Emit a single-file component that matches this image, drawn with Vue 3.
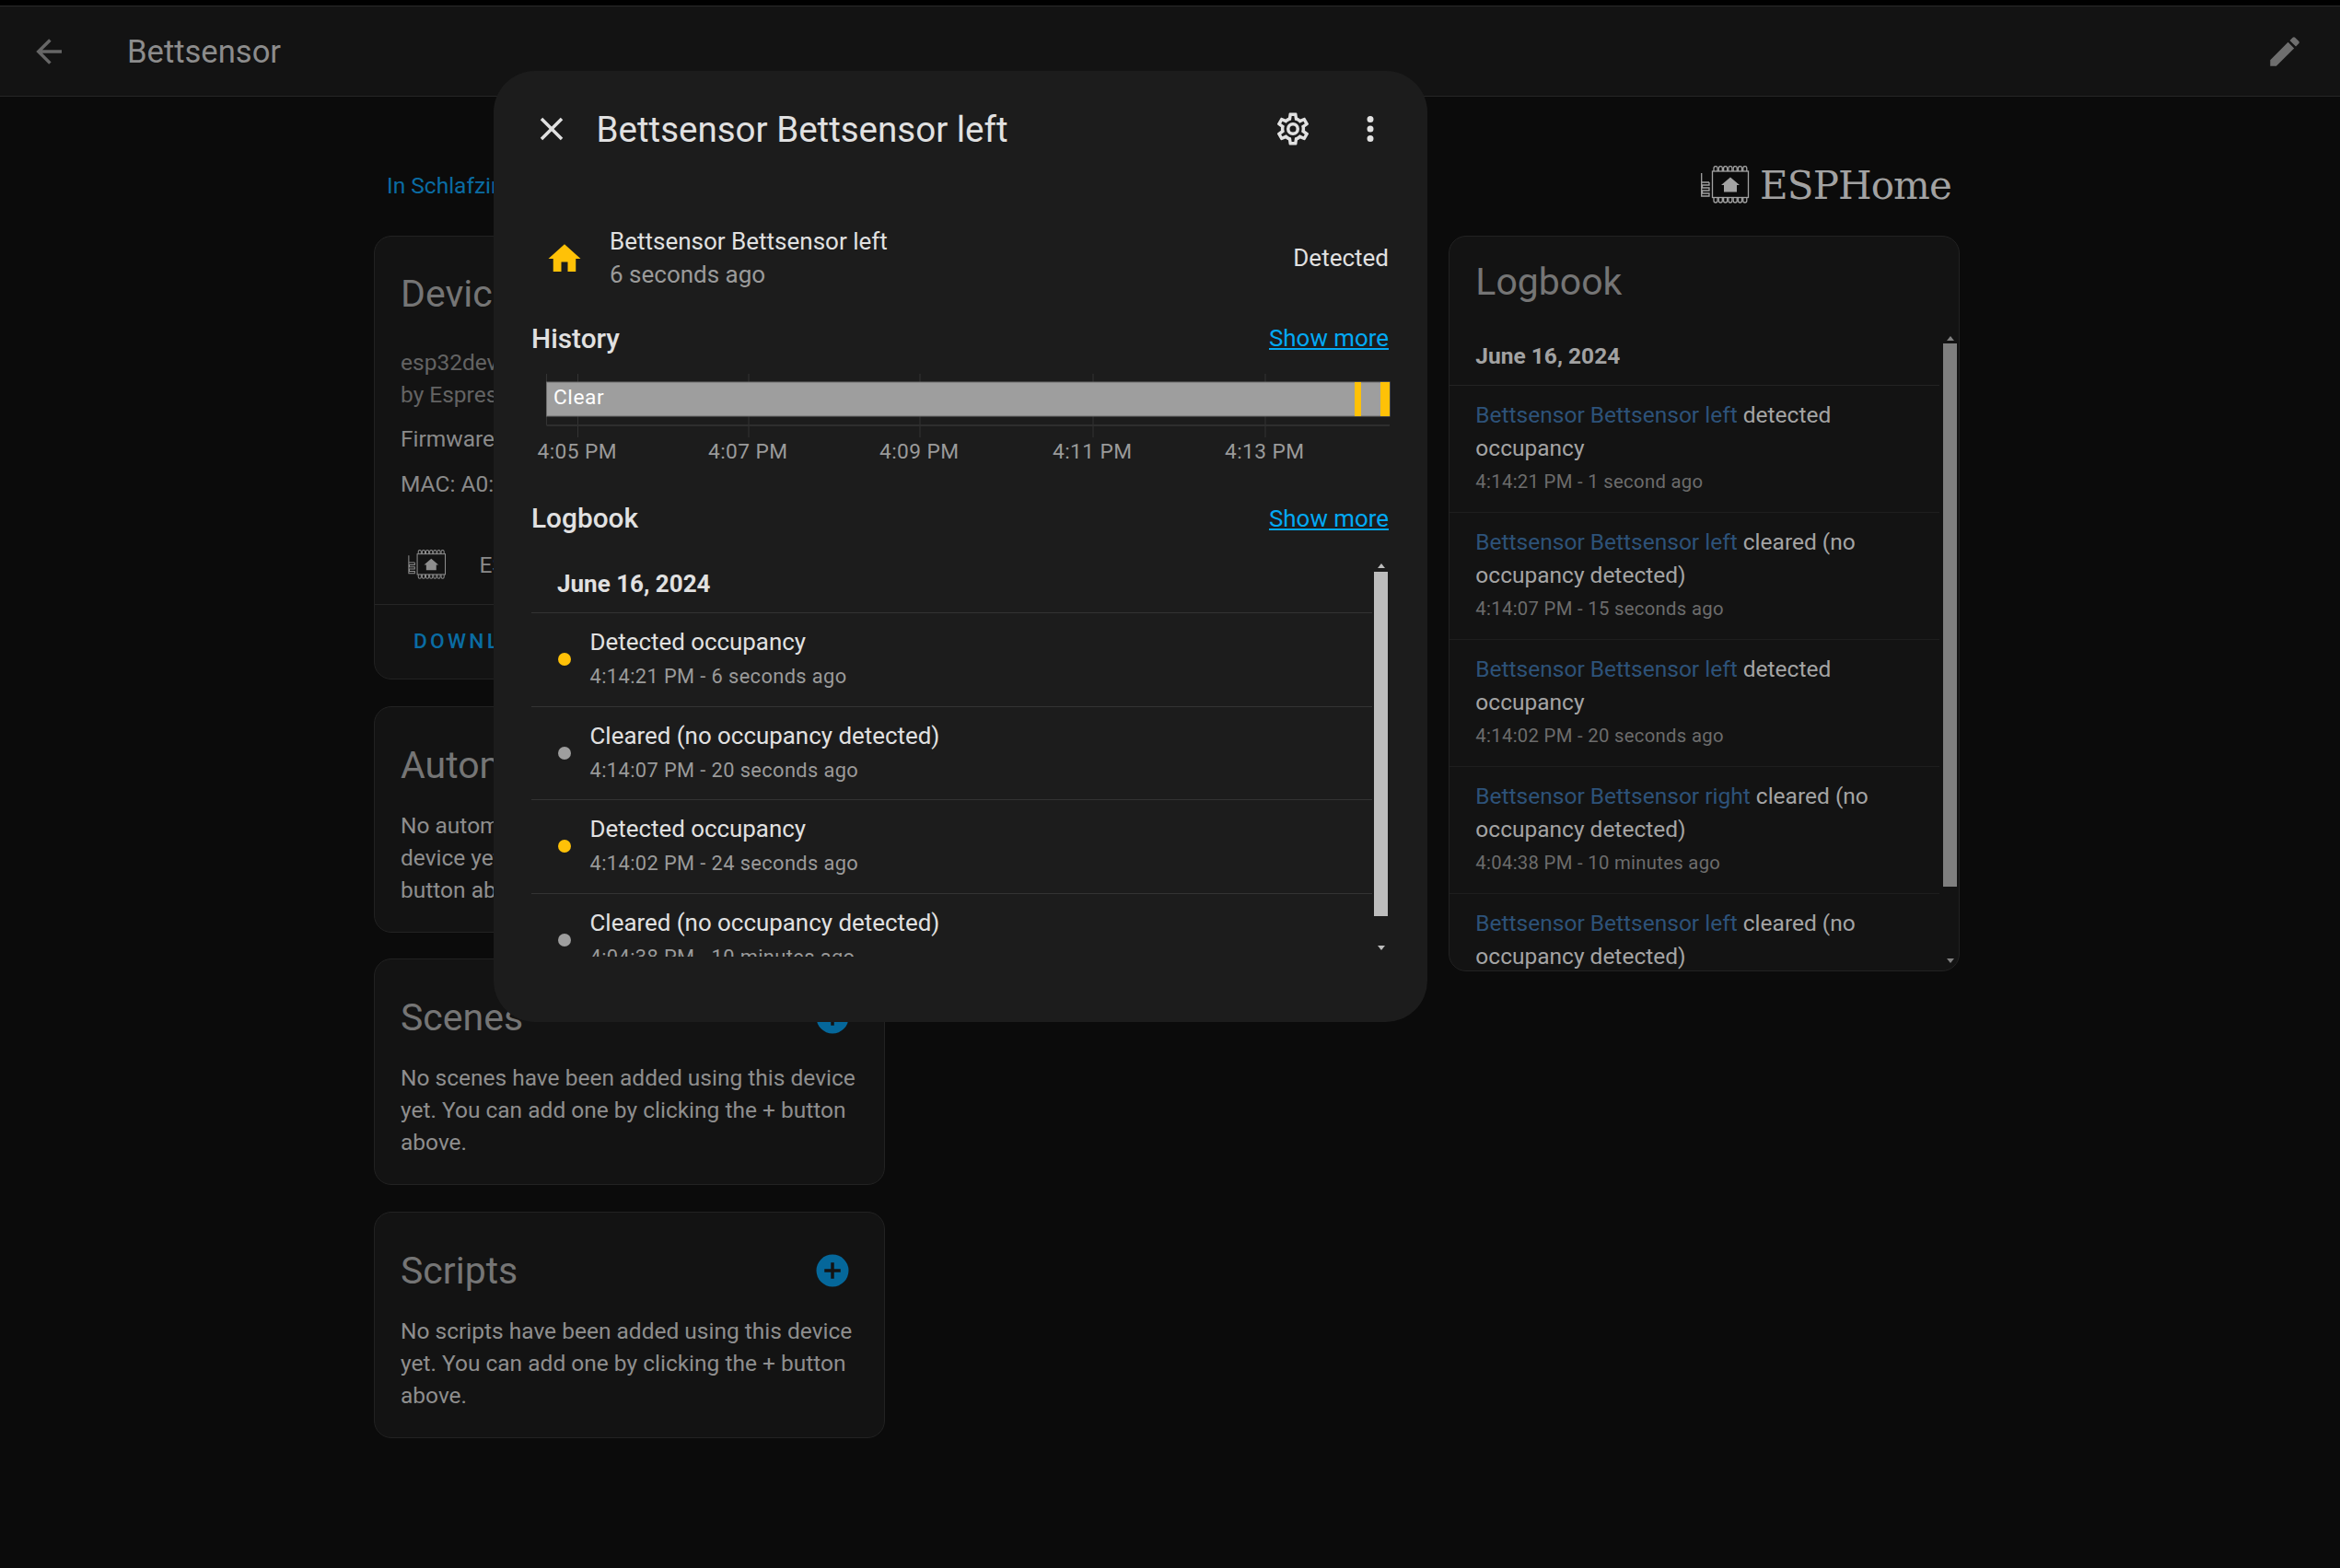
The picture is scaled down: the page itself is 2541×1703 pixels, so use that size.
<template>
  <div class="page">
    <!-- shared chip logo -->
    <svg class="defs" width="0" height="0">
      <symbol id="chip" viewBox="0 0 53 41">
        <g fill="none" stroke="currentColor" stroke-width="1.3">
          <rect x="12.5" y="6" width="39" height="28.5" />
          <path v-for="x in pinXs" :key="'t' + x" :d="`M${x} 6V2.6a2 2 0 0 1 4 0V6`" />
          <path v-for="x in pinXs" :key="'b' + x" :d="`M${x} 34.5V38a2 2 0 0 0 4 0V34.5`" />
          <path d="M.7 8V18H9M9 18V21H1.5V24H9V27H1.5V30H9V33H.7V18" />
        </g>
        <path fill="currentColor" d="M32 12.6 42 21H39V28.6H25V21H22Z" />
      </symbol>
    </svg>

    <div class="strip"></div>
    <header class="topbar">
      <svg class="icon back" viewBox="0 0 24 24"><path :d="icons.back" /></svg>
      <span class="topbar-title">Bettsensor</span>
      <svg class="icon pencil" viewBox="0 0 24 24"><path :d="icons.pencil" /></svg>
    </header>

    <main class="content">
      <div class="crumbs">
        <a class="area-link">In Schlafzimmer</a>
        <div class="logo">
          <svg class="logo-chip"><use href="#chip" /></svg>
          <span class="logo-text">ESPHome</span>
        </div>
      </div>

      <div class="columns">
        <div class="col">
          <section class="card device-card">
            <h2 class="card-title">Device info</h2>
            <div class="device-model">esp32dev<br />by Espressif</div>
            <div class="device-line first">Firmware</div>
            <div class="device-line">MAC: A0:</div>
            <div class="integration">
              <svg class="small-chip"><use href="#chip" /></svg>
              <span>ESPHome</span>
            </div>
            <div class="card-actions">DOWNLOAD DIAGNOSTICS</div>
          </section>

          <section class="card" v-for="block in blocks" :key="block.title">
            <div class="card-head">
              <h2 class="card-title">{{ block.title }}</h2>
              <svg class="icon plus" viewBox="0 0 24 24"><path :d="icons.plus" /></svg>
            </div>
            <p class="card-text">{{ block.text }}</p>
          </section>
        </div>

        <section class="card log-card">
          <h2 class="card-title">Logbook</h2>
          <div class="log-list">
            <div class="log-date">June 16, 2024</div>
            <div class="log-row" v-for="(row, i) in pageLog" :key="i">
              <div class="log-msg"><span class="log-name">{{ row.name }}</span> {{ row.msg }}</div>
              <div class="log-time">{{ row.time }}</div>
            </div>
          </div>
          <div class="scroll dim">
            <span class="arrow-up"></span>
            <span class="thumb"></span>
            <span class="arrow-down"></span>
          </div>
        </section>
      </div>
    </main>

    <div class="dialog">
      <div class="dialog-head">
        <svg class="icon close" viewBox="0 0 24 24"><path :d="icons.close" /></svg>
        <span class="dialog-title">Bettsensor Bettsensor left</span>
        <svg class="icon gear" viewBox="0 0 24 24"><path :d="icons.cog" /></svg>
        <svg class="icon dots" viewBox="0 0 24 24"><path :d="icons.dots" /></svg>
      </div>

      <div class="entity">
        <svg class="icon home" viewBox="0 0 24 24"><path :d="icons.home" /></svg>
        <div class="entity-info">
          <div class="entity-name">Bettsensor Bettsensor left</div>
          <div class="entity-ago">6 seconds ago</div>
        </div>
        <div class="entity-state">Detected</div>
      </div>

      <div class="section-head history-head">
        <span>History</span>
        <a class="more">Show more</a>
      </div>

      <svg class="chart" width="932" height="110" viewBox="0 0 932 110">
        <line x1="15.5" y1="6" x2="15.5" y2="62" class="grid" />
        <line v-for="t in ticks" :key="t.x" :x1="t.x" :x2="t.x" y1="6" y2="75" class="grid" />
        <rect x="15.5" y="61" width="915.5" height="2" fill="#2e2e2e" />
        <rect x="15.5" y="15" width="915.5" height="37" fill="#9e9e9e" stroke="#6e6e6e" stroke-width="1" />
        <rect x="893" y="15" width="7" height="37" fill="#ffc107" />
        <rect x="921" y="15" width="10" height="37" fill="#ffc107" />
        <text x="23" y="39" class="chart-state">Clear</text>
        <text v-for="t in ticks" :key="t.label" :x="t.x - 0.8" y="98" text-anchor="middle" class="chart-label">{{ t.label }}</text>
      </svg>

      <div class="section-head logbook-head">
        <span>Logbook</span>
        <a class="more">Show more</a>
      </div>

      <div class="dlg-log">
        <div class="dlg-list">
          <div class="dlg-date">June 16, 2024</div>
          <div class="dlg-row" v-for="(row, i) in dialogLog" :key="i">
            <span class="dot" :class="{ on: row.on }"></span>
            <div>
              <div class="dlg-msg">{{ row.msg }}</div>
              <div class="dlg-time">{{ row.time }}</div>
            </div>
          </div>
        </div>
        <div class="scroll bright">
          <span class="arrow-up"></span>
          <span class="thumb"></span>
          <span class="arrow-down"></span>
        </div>
      </div>
    </div>
  </div>
</template>

<script setup>
const pinXs = [14, 19.3, 24.6, 29.9, 35.2, 40.5, 45.8];

const icons = {
  back: "M20,11V13H8L13.5,18.5L12.08,19.92L4.16,12L12.08,4.08L13.5,5.5L8,11H20Z",
  pencil:
    "M20.71,7.04C21.1,6.65 21.1,6 20.71,5.63L18.37,3.29C18,2.9 17.35,2.9 16.96,3.29L15.12,5.12L18.87,8.87M3,17.25V21H6.75L17.81,9.93L14.06,6.18L3,17.25Z",
  close:
    "M19,6.41L17.59,5L12,10.59L6.41,5L5,6.41L10.59,12L5,17.59L6.41,19L12,13.41L17.59,19L19,17.59L13.41,12L19,6.41Z",
  cog: "M12,8A4,4 0 0,1 16,12A4,4 0 0,1 12,16A4,4 0 0,1 8,12A4,4 0 0,1 12,8M12,10A2,2 0 0,0 10,12A2,2 0 0,0 12,14A2,2 0 0,0 14,12A2,2 0 0,0 12,10M10,22C9.75,22 9.54,21.82 9.5,21.58L9.13,18.93C8.5,18.68 7.96,18.34 7.44,17.94L4.95,18.95C4.73,19.03 4.46,18.95 4.34,18.73L2.34,15.27C2.21,15.05 2.27,14.78 2.46,14.63L4.57,12.97L4.5,12L4.57,11L2.46,9.37C2.27,9.22 2.21,8.95 2.34,8.73L4.34,5.27C4.46,5.05 4.73,4.96 4.95,5.05L7.44,6.05C7.96,5.66 8.5,5.32 9.13,5.07L9.5,2.42C9.54,2.18 9.75,2 10,2H14C14.25,2 14.46,2.18 14.5,2.42L14.87,5.07C15.5,5.32 16.04,5.66 16.56,6.05L19.05,5.05C19.27,4.96 19.54,5.05 19.66,5.27L21.66,8.73C21.79,8.95 21.73,9.22 21.54,9.37L19.43,11L19.5,12L19.43,13L21.54,14.63C21.73,14.78 21.79,15.05 21.66,15.27L19.66,18.73C19.54,18.95 19.27,19.04 19.05,18.95L16.56,17.95C16.04,18.34 15.5,18.68 14.87,18.93L14.5,21.58C14.46,21.82 14.25,22 14,22H10M11.25,4L10.88,6.61C9.68,6.86 8.62,7.5 7.85,8.39L5.44,7.35L4.69,8.65L6.8,10.2C6.4,11.37 6.4,12.64 6.8,13.8L4.68,15.36L5.43,16.66L7.86,15.62C8.63,16.5 9.68,17.14 10.87,17.38L11.24,20H12.76L13.13,17.39C14.32,17.14 15.37,16.5 16.14,15.62L18.57,16.66L19.32,15.36L17.2,13.81C17.6,12.64 17.6,11.37 17.2,10.2L19.31,8.65L18.56,7.35L16.15,8.39C15.38,7.5 14.32,6.86 13.12,6.62L12.75,4H11.25Z",
  dots: "M12,16A2,2 0 0,1 14,18A2,2 0 0,1 12,20A2,2 0 0,1 10,18A2,2 0 0,1 12,16M12,10A2,2 0 0,1 14,12A2,2 0 0,1 12,14A2,2 0 0,1 10,12A2,2 0 0,1 12,10M12,4A2,2 0 0,1 14,6A2,2 0 0,1 12,8A2,2 0 0,1 10,6A2,2 0 0,1 12,4Z",
  home: "M10,20V14H14V20H19V12H22L12,3L2,12H5V20H10Z",
  plus: "M17,13H13V17H11V13H7V11H11V7H13V11H17M12,2A10,10 0 0,0 2,12A10,10 0 0,0 12,22A10,10 0 0,0 22,12A10,10 0 0,0 12,2Z",
};

const blocks = [
  {
    title: "Automations",
    text: "No automations have been added using this device yet. You can add one by clicking the + button above.",
  },
  {
    title: "Scenes",
    text: "No scenes have been added using this device yet. You can add one by clicking the + button above.",
  },
  {
    title: "Scripts",
    text: "No scripts have been added using this device yet. You can add one by clicking the + button above.",
  },
];

const ticks = [
  { x: 49.5, label: "4:05 PM" },
  { x: 235, label: "4:07 PM" },
  { x: 421, label: "4:09 PM" },
  { x: 609, label: "4:11 PM" },
  { x: 796, label: "4:13 PM" },
];

const pageLog = [
  { name: "Bettsensor Bettsensor left", msg: "detected occupancy", time: "4:14:21 PM - 1 second ago" },
  { name: "Bettsensor Bettsensor left", msg: "cleared (no occupancy detected)", time: "4:14:07 PM - 15 seconds ago" },
  { name: "Bettsensor Bettsensor left", msg: "detected occupancy", time: "4:14:02 PM - 20 seconds ago" },
  { name: "Bettsensor Bettsensor right", msg: "cleared (no occupancy detected)", time: "4:04:38 PM - 10 minutes ago" },
  { name: "Bettsensor Bettsensor left", msg: "cleared (no occupancy detected)", time: "" },
];

const dialogLog = [
  { on: true, msg: "Detected occupancy", time: "4:14:21 PM - 6 seconds ago" },
  { on: false, msg: "Cleared (no occupancy detected)", time: "4:14:07 PM - 20 seconds ago" },
  { on: true, msg: "Detected occupancy", time: "4:14:02 PM - 24 seconds ago" },
  { on: false, msg: "Cleared (no occupancy detected)", time: "4:04:38 PM - 10 minutes ago" },
];
</script>

<style>
html,
body {
  background: #0b0b0b;
}
</style>

<style scoped>
.page {
  position: relative;
  height: 1703px;
  overflow: hidden;
  background: #0b0b0b;
  font-family: Roboto, "Noto Sans", sans-serif;
  color: #8e8e8e;
}

.defs {
  position: absolute;
}

.strip {
  height: 6px;
  background: #000;
}

.icon {
  flex: none;
  width: 42px;
  height: 42px;
  fill: currentColor;
}

/* ---------- top bar ---------- */
.topbar {
  display: flex;
  align-items: center;
  height: 97px;
  padding: 0 39px 0 32px;
  background: #131313;
  border-top: 1px solid #2a2a2a;
  border-bottom: 1px solid #262626;
}

.back {
  color: #666;
}

.topbar-title {
  margin-left: 64px;
  font-size: 34.6px;
  color: #8c8c8c;
}

.pencil {
  margin-left: auto;
  color: #6e6e6e;
}

/* ---------- page content ---------- */
.content {
  width: 1722px;
  margin-left: 406px;
  padding-top: 70px;
}

.crumbs {
  display: flex;
  align-items: center;
  justify-content: space-between;
  height: 52px;
  margin-bottom: 29px;
  padding: 0 9px 0 14px;
}

.area-link {
  font-size: 24.5px;
  color: #0a6ca3;
}

.logo {
  display: flex;
  align-items: center;
  gap: 11.5px;
  margin-top: 2px;
  color: #a2a2a2;
}

.logo-chip {
  width: 53px;
  height: 41px;
  margin-top: -3px;
}

.logo-text {
  font-family: "DejaVu Serif", serif;
  font-size: 42px;
  letter-spacing: -0.9px;
  line-height: 52px;
}

.columns {
  display: grid;
  grid-template-columns: repeat(3, 1fr);
  column-gap: 29px;
}

.col {
  display: flex;
  flex-direction: column;
  gap: 28.5px;
}

.card {
  position: relative;
  box-sizing: border-box;
  height: 246px;
  padding: 15px 28px 0;
  background: #131313;
  border: 1px solid #222;
  border-radius: 19px;
  overflow: hidden;
}

.card-head {
  display: flex;
  align-items: center;
  justify-content: space-between;
  padding-right: 6.5px;
  margin-top: 13px;
}

.card-title {
  margin: 0;
  font-size: 41px;
  font-weight: 400;
  line-height: 70px;
  color: #757575;
  white-space: nowrap;
}

.plus {
  color: #05679a;
}

.card-text {
  margin: 13px 0 0;
  font-size: 24.5px;
  line-height: 35px;
  color: #8e8e8e;
}

.device-card {
  height: 482px;
  padding-top: 27px;
}

.device-model {
  margin-top: 21.5px;
  font-size: 24.5px;
  line-height: 35.5px;
  color: #636363;
}

.device-line {
  margin-top: 14px;
  font-size: 24.5px;
  line-height: 35px;
  color: #8a8a8a;
}

.device-line.first {
  margin-top: 12.5px;
}

.integration {
  display: flex;
  align-items: center;
  gap: 36px;
  margin-top: 54px;
  padding-left: 7.5px;
  font-size: 24.5px;
  color: #8a8a8a;
}

.small-chip {
  width: 42px;
  height: 32px;
  color: #8e8e8e;
}

.card-actions {
  position: absolute;
  left: 0;
  right: 0;
  bottom: 0;
  height: 80px;
  padding-left: 42px;
  line-height: 80px;
  border-top: 1px solid #262626;
  font-size: 22.7px;
  font-weight: 500;
  letter-spacing: 3.3px;
  color: #0a6ca3;
}

/* ---------- page logbook ---------- */
.log-card {
  grid-column: 3;
  height: 799px;
  padding-top: 14px;
}

.log-list {
  margin: 15px -27px 0 -28px;
  padding-right: 20px;
}

.log-date {
  height: 62px;
  padding-left: 28px;
  font-size: 24.5px;
  font-weight: 700;
  line-height: 62px;
  color: #a2a2a2;
  border-bottom: 1px solid #232323;
}

.log-row {
  box-sizing: border-box;
  height: 138px;
  padding: 14px 48px 0 28px;
  border-bottom: 1px solid #1e1e1e;
}

.log-msg {
  font-size: 24.5px;
  line-height: 36px;
  color: #a4a4a4;
}

.log-name {
  color: #2d5279;
}

.log-time {
  font-size: 20.3px;
  line-height: 37.5px;
  letter-spacing: 0.3px;
  color: #6c6c6c;
}

/* ---------- scrollbars (drawn over the lists) ---------- */
.scroll {
  position: absolute;
  display: flex;
  flex-direction: column;
  align-items: center;
}

.scroll .thumb {
  display: block;
  width: 15px;
}

.arrow-up,
.arrow-down {
  display: block;
  width: 0;
  height: 0;
  border-left: 4.5px solid transparent;
  border-right: 4.5px solid transparent;
}

.arrow-up {
  border-bottom: 5px solid currentColor;
}

.arrow-down {
  border-top: 5px solid currentColor;
}

.dim {
  top: 108px;
  right: 2px;
  width: 15px;
  color: #7f7f7f;
}

.dim .arrow-up {
  margin-bottom: 3px;
}

.dim .thumb {
  height: 590px;
  background: #7f7f7f;
}

.dim .arrow-down {
  margin-top: 78px;
}

/* ---------- dialog ---------- */
.dialog {
  position: absolute;
  top: 77px;
  left: 536px;
  box-sizing: border-box;
  width: 1014px;
  height: 1033px;
  padding: 0 42px 0 41px;
  background: #1c1c1c;
  border-radius: 45px;
  color: #e1e1e1;
}

.dialog-head {
  display: flex;
  align-items: center;
  height: 126px;
}

.close {
  margin-left: 1px;
}

.dialog-title {
  margin-left: 27.6px;
  font-size: 38.5px;
  color: #e1e1e1;
}

.gear {
  margin-left: auto;
}

.dots {
  margin-left: 42px;
  margin-right: -1px;
}

.entity {
  display: flex;
  align-items: center;
  height: 71px;
  margin-top: 42px;
  padding-left: 15px;
}

.home {
  color: #ffc107;
}

.entity-info {
  margin-left: 28px;
}

.entity-name {
  font-size: 26px;
  line-height: 35px;
}

.entity-ago {
  font-size: 26px;
  line-height: 36px;
  color: #9a9a9a;
}

.entity-state {
  margin-left: auto;
  margin-top: -2px;
  font-size: 26px;
  color: #e1e1e1;
}

.section-head {
  display: flex;
  align-items: center;
  justify-content: space-between;
  height: 36px;
  font-size: 29.8px;
  font-weight: 500;
  color: #e1e1e1;
}

.history-head {
  margin-top: 33px;
}

.logbook-head {
  margin-top: 35px;
}

.more {
  font-size: 25.9px;
  font-weight: 400;
  color: #03a9f4;
  text-decoration: underline;
}

.chart {
  display: block;
  margin-top: 14.5px;
  margin-left: 1px;
}

.grid {
  stroke: #333;
  stroke-width: 1;
}

.chart-state {
  font-size: 22.7px;
  letter-spacing: 0.6px;
  fill: #fff;
}

.chart-label {
  font-size: 22.7px;
  letter-spacing: 0.4px;
  fill: #9a9a9a;
}

.dlg-log {
  position: relative;
  margin-top: 29px;
}

.dlg-list {
  box-sizing: border-box;
  height: 429px;
  padding-right: 18px;
  overflow: hidden;
}

.dlg-date {
  height: 55.5px;
  padding-left: 28px;
  font-size: 26px;
  font-weight: 700;
  line-height: 48px;
  border-bottom: 1px solid #333;
}

.dlg-row {
  display: flex;
  align-items: center;
  box-sizing: border-box;
  height: 101.5px;
  padding-left: 29px;
  gap: 20.5px;
  border-bottom: 1px solid #333;
}

.dot {
  flex: none;
  width: 14px;
  height: 14px;
  border-radius: 50%;
  background: #9e9e9e;
}

.dot.on {
  background: #ffc107;
}

.dlg-msg {
  font-size: 25.9px;
  line-height: 37px;
  color: #e1e1e1;
}

.dlg-time {
  font-size: 21.8px;
  line-height: 37px;
  letter-spacing: 0.4px;
  color: #9a9a9a;
}

.bright {
  top: 2px;
  right: 1px;
  width: 15px;
  color: #bdbdbd;
}

.bright .arrow-up {
  margin-bottom: 4px;
}

.bright .thumb {
  height: 374px;
  background: #bdbdbd;
}

.bright .arrow-down {
  margin-top: 32px;
}
</style>
